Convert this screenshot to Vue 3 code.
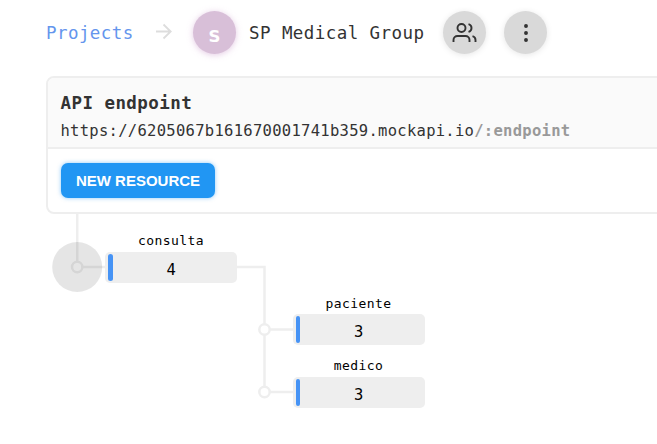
<script setup>
const nodes = [
  { name: 'consulta', count: 4, x: 105, y: 230 },
  { name: 'paciente', count: 3, x: 292.5, y: 292.5 },
  { name: 'medico', count: 3, x: 292.5, y: 355 },
]
</script>

<template>
  <div class="page">
    <header class="header">
      <a class="back">Projects</a>
      <svg class="arrow" width="16" height="15" viewBox="0 0 16 15">
        <path d="M0 7.5H15M7.5 .5L14.7 7.5L7.5 14.5" />
      </svg>
      <span class="circle avatar">s</span>
      <span class="title">SP Medical Group</span>
      <button class="circle people" aria-label="Collaborators">
        <svg width="25" height="24" viewBox="-.5 0 25 24">
          <path d="M17 21v-2a4 4 0 0 0-4-4H5a4 4 0 0 0-4 4v2M23 21v-2a4 4 0 0 0-3-3.87M16 3.13a4 4 0 0 1 0 7.75" />
          <circle cx="9" cy="7" r="4" />
        </svg>
      </button>
      <button class="circle" aria-label="More">
        <svg width="24" height="24" viewBox="0 0 24 24">
          <circle cx="12" cy="5" r="1" /><circle cx="12" cy="12" r="1" /><circle cx="12" cy="19" r="1" />
        </svg>
      </button>
    </header>

    <section class="card">
      <div class="card-head">
        <h4>API endpoint</h4>
        <div class="url">https://6205067b161670001741b359.mockapi.io<b>/:endpoint</b></div>
      </div>
      <div class="card-body"><button class="new">NEW RESOURCE</button></div>
    </section>

    <svg class="links" width="657" height="230" viewBox="0 214 657 230">
      <path d="M77.2 214V267H105M237 267H264.5V392M264.5 329.5H293M264.5 392H293" />
      <circle cx="77.2" cy="267" r="5.2" />
      <circle cx="264.5" cy="329.5" r="5.2" />
      <circle cx="264.5" cy="392" r="5.2" />
      <circle class="halo" cx="77.2" cy="267" r="25" />
    </svg>
    <div v-for="n in nodes" :key="n.name" class="node" :style="{ left: n.x + 'px', top: n.y + 'px' }">
      <div class="name">{{ n.name }}</div>
      <div class="box"><i class="bar"></i><span>{{ n.count }}</span></div>
    </div>
  </div>
</template>

<style>
body { margin: 0; background: #fff; }
</style>

<style scoped>
.page {
  position: relative;
  width: 657px;
  height: 444px;
  overflow: hidden;
  box-sizing: border-box;
  padding: 11px 0 0 46px;
  font-family: "DejaVu Sans Mono", monospace;
  color: #333;
}
.header { display: flex; align-items: center; height: 43px; font-size: 17.5px; letter-spacing: 0.43px; white-space: pre; }
.back { color: #6495ed; width: 88px; }
.arrow { margin: 0 22px 3px 22px; overflow: visible; }
.arrow path { fill: none; stroke: #ddd; stroke-width: 1.8; }
.circle {
  flex: none;
  display: flex;
  align-items: center;
  justify-content: center;
  width: 43px;
  height: 43px;
  border: 0;
  padding: 0;
  border-radius: 50%;
  background: #d9d9d9;
  box-shadow: 0 1px 6px rgba(0, 0, 0, 0.1);
}
.circle svg { fill: none; stroke: #333; stroke-width: 1.9; stroke-linecap: butt; }
.avatar {
  margin-left: -1px;
  box-sizing: border-box;
  padding-top: 3px;
  background: #d8bfd8;
  color: #fff;
  font-size: 22px;
  font-weight: bold;
  box-shadow: 0 1px 6px rgba(216, 180, 216, 0.7);
}
.title { width: 194px; margin-left: 13px; }
.people { margin-right: 18px; }
.card {
  width: 640px;
  height: 138px;
  box-sizing: border-box;
  margin-top: 22px;
  border: 2px solid #eee;
  border-radius: 8px;
  overflow: hidden;
}
.card-head { height: 71px; box-sizing: border-box; padding: 13px 0 0 12.5px; background: #fafafa; border-bottom: 2px solid #eee; }
h4 { margin: 0; font-size: 17.5px; line-height: 25px; letter-spacing: 0.44px; }
.url { font-size: 15.5px; line-height: 31px; letter-spacing: 0.29px; white-space: nowrap; }
.url b { color: #999; }
.card-body { padding: 14px 13px; }
.new {
  display: block;
  width: 154px;
  height: 35px;
  padding: 0;
  border: 0;
  border-radius: 7px;
  background: #2196f3;
  color: #fff;
  font: bold 15px "Liberation Sans", sans-serif;
  box-shadow: 0 0 4px rgba(33, 150, 243, 0.5);
}
.links { position: absolute; left: 0; top: 214px; }
.links path { fill: none; stroke: #eee; stroke-width: 2.5; }
.links circle { fill: #fff; stroke: #eee; stroke-width: 2.5; }
.links .halo { fill: rgba(0, 0, 0, 0.1); stroke: none; }
.node { position: absolute; width: 132px; color: #000; text-align: center; }
.name { height: 21.5px; line-height: 22px; font-size: 13px; letter-spacing: 0.42px; }
.box {
  display: flex;
  align-items: center;
  height: 31px;
  box-sizing: border-box;
  padding: 0 3px;
  background: #eee;
  border-radius: 5px;
}
.box span { flex: 1; padding: 5px 4px 0 0; font-size: 15.5px; line-height: 20px; }
.bar { width: 4.5px; height: 27px; border-radius: 2.5px; background: #4693f5; }
</style>
